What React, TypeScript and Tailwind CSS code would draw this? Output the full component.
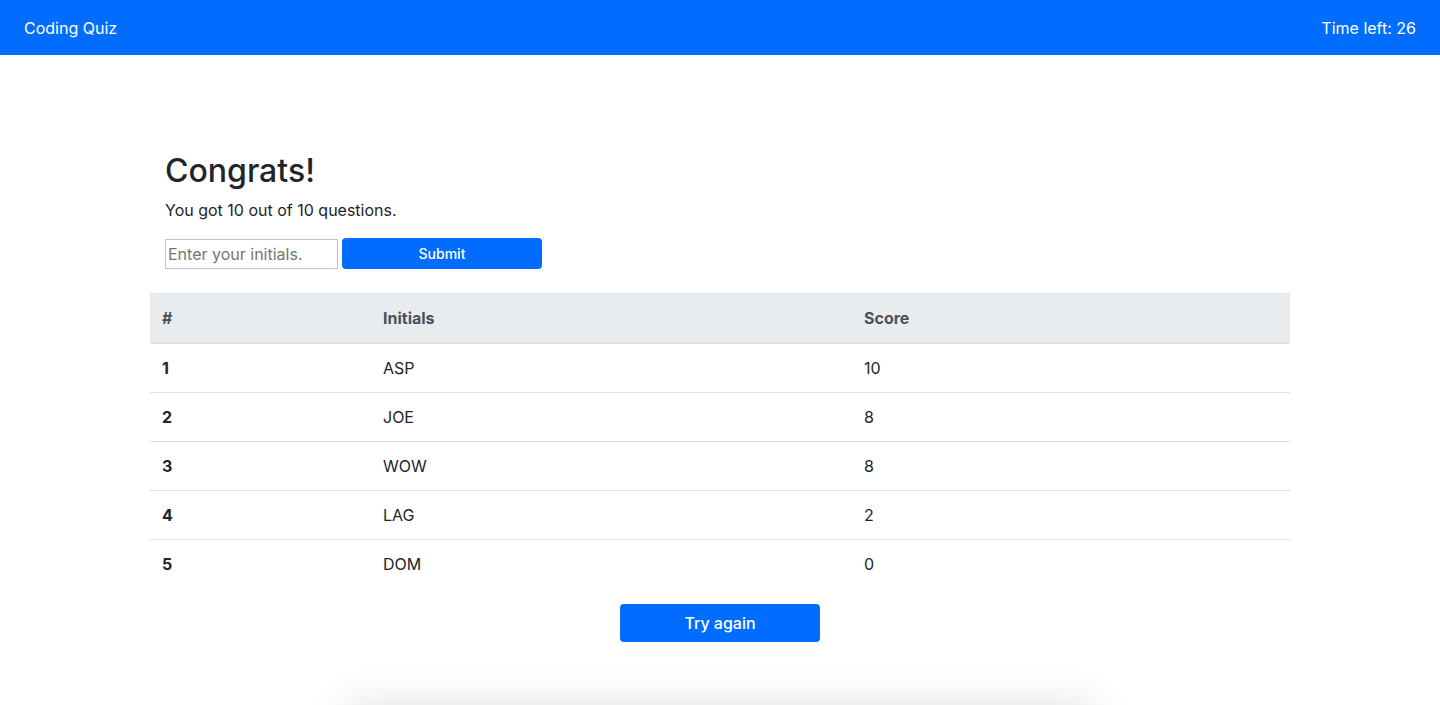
const scores = [
  { rank: 1, initials: "ASP", score: 10 },
  { rank: 2, initials: "JOE", score: 8 },
  { rank: 3, initials: "WOW", score: 8 },
  { rank: 4, initials: "LAG", score: 2 },
  { rank: 5, initials: "DOM", score: 0 },
]

const App = () => {
  return (
    <div className="h-screen bg-white text-[#212529] font-['Inter',sans-serif] overflow-hidden">
      <nav className="h-[55px] bg-[#006dff] text-white flex items-center justify-between px-6 text-base">
        <span>Coding Quiz</span>
        <span>Time left: 26</span>
      </nav>

      <main className="w-[1140px] mx-auto pt-[97px]">
        <div className="px-[15px]">
          <h2 className="text-[32px] leading-[1.2] font-medium mb-2">Congrats!</h2>
          <p className="text-base leading-6 mb-4">You got 10 out of 10 questions.</p>
          <form className="flex items-center gap-1" onSubmit={(e) => e.preventDefault()}>
            <input
              type="text"
              placeholder="Enter your initials."
              className="w-[173px] h-[30px] border border-[#c4c4c4] px-[2px] text-base placeholder:text-[#757575] outline-none"
            />
            <button type="submit" className="w-[200px] h-[31px] rounded bg-[#006dff] text-white text-sm font-medium">
              Submit
            </button>
          </form>
        </div>

        <table className="w-full mt-6 border-collapse text-base">
          <thead>
            <tr className="bg-[#e9ecef] text-[#495057] border-t border-[#dee2e6] border-b-2">
              <th className="w-[221px] text-left font-bold px-3 py-3 leading-6">#</th>
              <th className="w-[481px] text-left font-bold px-3 py-3 leading-6">Initials</th>
              <th className="text-left font-bold px-3 py-3 leading-6">Score</th>
            </tr>
          </thead>
          <tbody>
            {scores.map((s) => (
              <tr key={s.rank} className="border-b border-[#dee2e6] last:border-b-0">
                <th className="text-left font-bold px-3 py-3 leading-6">{s.rank}</th>
                <td className="px-3 py-3 leading-6">{s.initials}</td>
                <td className="px-3 py-3 leading-6">{s.score}</td>
              </tr>
            ))}
          </tbody>
        </table>

        <div className="flex justify-center mt-4">
          <button className="w-[200px] h-[38px] rounded bg-[#006dff] text-white text-base font-medium">Try again</button>
        </div>

        <div className="w-[750px] h-[200px] mx-auto mt-[63px] bg-white shadow-[0_0_40px_rgba(0,0,0,0.12)]" />
      </main>
    </div>
  )
}

export default App
